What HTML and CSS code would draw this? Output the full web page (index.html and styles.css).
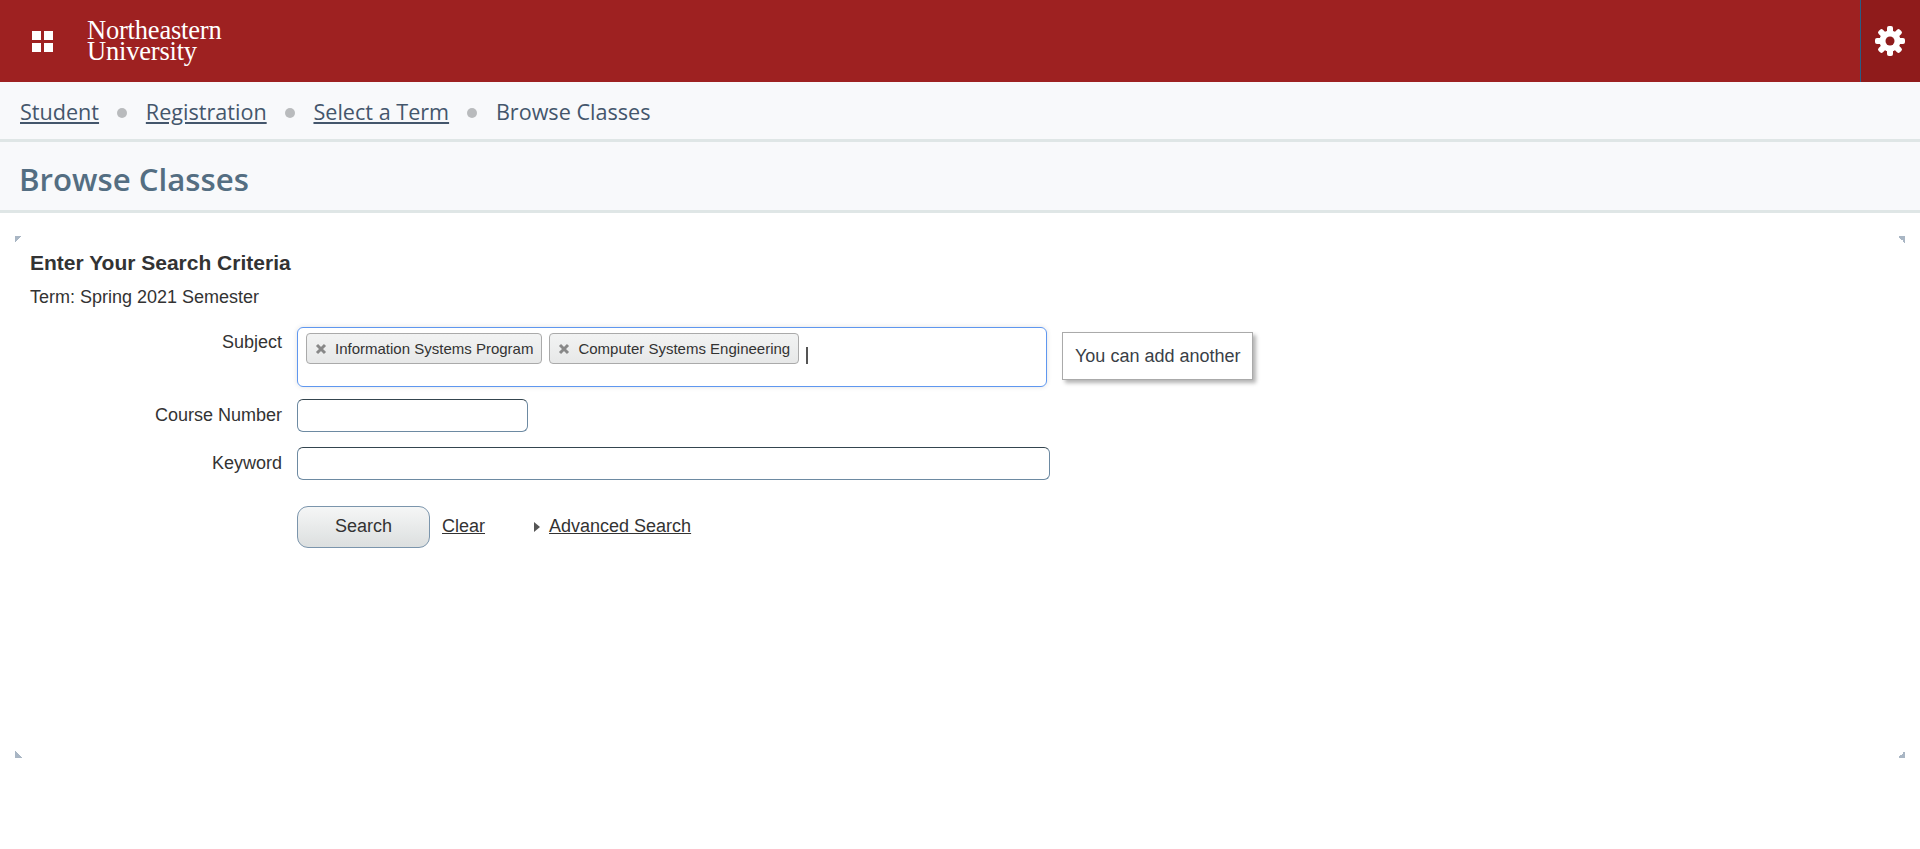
FILE: index.html
```html
<!DOCTYPE html>
<html>
<head>
  <title>Browse Classes</title>
  <link rel="stylesheet" href="styles.css">
</head>
<body>
  <header class="top-bar">
    <div class="brand">
      <svg class="apps-icon" width="21" height="21" viewBox="0 0 21 21">
        <rect width="9" height="9" fill="#fff"/>
        <rect x="12" width="9" height="9" fill="#fff"/>
        <rect y="12" width="9" height="9" fill="#fff"/>
        <rect x="12" y="12" width="9" height="9" fill="#fff"/>
      </svg>
      <div class="logo">Northeastern<br>University</div>
    </div>
    <div class="settings">
      <svg width="30" height="30" viewBox="0 0 30 30">
        <g fill="#fff">
          <rect x="12" y="0" width="6" height="30" rx="2"/>
          <rect x="12" y="0" width="6" height="30" rx="2" transform="rotate(45 15 15)"/>
          <rect x="12" y="0" width="6" height="30" rx="2" transform="rotate(90 15 15)"/>
          <rect x="12" y="0" width="6" height="30" rx="2" transform="rotate(135 15 15)"/>
          <circle cx="15" cy="15" r="10.5"/>
        </g>
        <circle cx="15" cy="15" r="4.5" fill="#8f1b1b"/>
      </svg>
    </div>
  </header>

  <nav class="breadcrumb">
    <a href="#">Student</a>
    <span class="dot"></span>
    <a href="#">Registration</a>
    <span class="dot"></span>
    <a href="#">Select a Term</a>
    <span class="dot"></span>
    <span>Browse Classes</span>
  </nav>

  <div class="page-title">
    <h1>Browse Classes</h1>
  </div>

  <main class="panel">
    <span class="corner tl"></span>
    <span class="corner tr"></span>
    <span class="corner bl"></span>
    <span class="corner br"></span>

    <h2>Enter Your Search Criteria</h2>
    <p class="term">Term: Spring 2021 Semester</p>

    <div class="form-row subject-row">
      <label>Subject</label>
      <div class="tag-box">
        <span class="tag">
          <svg class="tag-x" width="12" height="12" viewBox="0 0 12 12"><path d="M2 2 L10 10 M10 2 L2 10" stroke="#888" stroke-width="3"/></svg>
          Information Systems Program
        </span>
        <span class="tag">
          <svg class="tag-x" width="12" height="12" viewBox="0 0 12 12"><path d="M2 2 L10 10 M10 2 L2 10" stroke="#888" stroke-width="3"/></svg>
          Computer Systems Engineering
        </span>
        <span class="caret"></span>
      </div>
      <div class="hint">You can add another</div>
    </div>

    <div class="form-row course-row">
      <label>Course Number</label>
      <input type="text" class="field short">
    </div>

    <div class="form-row keyword-row">
      <label>Keyword</label>
      <input type="text" class="field long">
    </div>

    <div class="actions">
      <button>Search</button>
      <a href="#" class="clear">Clear</a>
      <span class="arrow"></span>
      <a href="#">Advanced Search</a>
    </div>
  </main>
</body>
</html>
```

FILE: styles.css
```css
* {
  box-sizing: border-box;
}

body {
  margin: 0;
  font-family: "Liberation Sans", Arial, sans-serif;
  font-size: 18px;
  color: #333;
  background-color: #fff;
}

.top-bar {
  height: 82px;
  display: flex;
  justify-content: space-between;
  background-color: #9e2121;
}

.brand {
  display: flex;
  align-items: center;
  padding-left: 32px;
}

.logo {
  margin-left: 34px;
  margin-top: -1px;
  font-family: "Liberation Serif", serif;
  font-size: 26.5px;
  line-height: 21px;
  letter-spacing: -0.2px;
  color: #fff;
}

.settings {
  width: 60px;
  display: flex;
  align-items: center;
  justify-content: center;
  padding-right: 2px;
  background-color: #8f1b1b;
  border-left: 1px solid #2b5c84;
}

.breadcrumb {
  height: 60px;
  display: flex;
  align-items: center;
  padding: 1px 0 0 20px;
  font-family: "Open Sans", sans-serif;
  font-size: 21.6px;
  color: #44566c;
  background-color: #f8f9fb;
  border-bottom: 3px solid #dfe6e6;
}

.breadcrumb a {
  color: #44566c;
}

.dot {
  width: 10px;
  height: 10px;
  margin: 4px 18.4px 0;
  border-radius: 50%;
  background-color: #b9bbbd;
}

.page-title {
  height: 71px;
  padding: 6px 0 0 19px;
  display: flex;
  align-items: center;
  background-color: #f8f9fb;
  border-bottom: 3px solid #dfe6e6;
}

h1 {
  margin: 0;
  font-family: "Open Sans", sans-serif;
  font-size: 31.2px;
  font-weight: 600;
  color: #546e82;
}

.panel {
  position: relative;
  height: 522px;
  margin: 23px 15px 0;
  padding: 16px 15px 0;
}

.corner {
  position: absolute;
  width: 7px;
  height: 7px;
}

.tl {
  top: 0;
  left: 0;
  background: linear-gradient(135deg, #a9b6c4 50%, transparent 50%);
}

.tr {
  top: 0;
  right: 0;
  background: linear-gradient(225deg, #a9b6c4 50%, transparent 50%);
}

.bl {
  bottom: 0;
  left: 0;
  background: linear-gradient(45deg, #a9b6c4 50%, transparent 50%);
}

.br {
  bottom: 0;
  right: 0;
  background: linear-gradient(315deg, #a9b6c4 50%, transparent 50%);
}

h2 {
  margin: 0;
  font-size: 21px;
  line-height: 22px;
  font-weight: bold;
}

.term {
  margin: 13px 0 0;
  line-height: 20px;
}

.form-row {
  display: flex;
  align-items: flex-start;
}

.form-row label {
  width: 267px;
  flex-shrink: 0;
  padding-right: 15px;
  text-align: right;
  line-height: 20px;
}

.subject-row {
  margin-top: 20px;
}

.subject-row label {
  padding-top: 5px;
}

.tag-box {
  width: 750px;
  height: 60px;
  display: flex;
  align-items: flex-start;
  padding: 5px 8px;
  gap: 7px;
  border: 1px solid #5f97ef;
  border-radius: 6px;
  box-shadow: 0 0 5px rgba(0, 0, 0, 0.12);
}

.tag {
  height: 31px;
  padding: 0 8px;
  display: flex;
  align-items: center;
  font-size: 15px;
  color: #333;
  background: linear-gradient(#f2f3f3, #e7e8e8);
  border: 1px solid #aaa;
  border-radius: 4px;
}

.tag-x {
  margin-right: 8px;
}

.caret {
  width: 2px;
  height: 17px;
  margin: 14px 0 0 0;
  background-color: #555;
}

.hint {
  margin: 5px 0 0 15px;
  padding: 0 12px;
  height: 48px;
  line-height: 46px;
  color: #3a3f47;
  white-space: nowrap;
  border: 1px solid #aaa;
  box-shadow: 3px 3px 4px rgba(0, 0, 0, 0.3);
}

.course-row {
  margin-top: 12px;
}

.keyword-row {
  margin-top: 15px;
}

.course-row label,
.keyword-row label {
  padding-top: 6px;
}

.field {
  height: 33px;
  padding: 0 8px;
  border: 1px solid #6d8aa2;
  border-top-color: #34454f;
  border-radius: 6px;
  background-color: #fff;
}

.short {
  width: 231px;
}

.long {
  width: 753px;
}

.actions {
  display: flex;
  align-items: center;
  margin: 26px 0 0 267px;
}

.actions a {
  margin-bottom: 2px;
  color: #333;
}

button {
  width: 133px;
  height: 42px;
  padding-bottom: 3px;
  font-family: "Liberation Sans", Arial, sans-serif;
  font-size: 18px;
  color: #333;
  background: linear-gradient(#f5f6f6, #dcdfdf);
  border: 1px solid #7b95ac;
  border-radius: 11px;
}

.actions .clear {
  margin-left: 12px;
}

.arrow {
  margin: 0 9px 0 49px;
  border-left: 6px solid #555;
  border-top: 5.5px solid transparent;
  border-bottom: 5.5px solid transparent;
}
```
